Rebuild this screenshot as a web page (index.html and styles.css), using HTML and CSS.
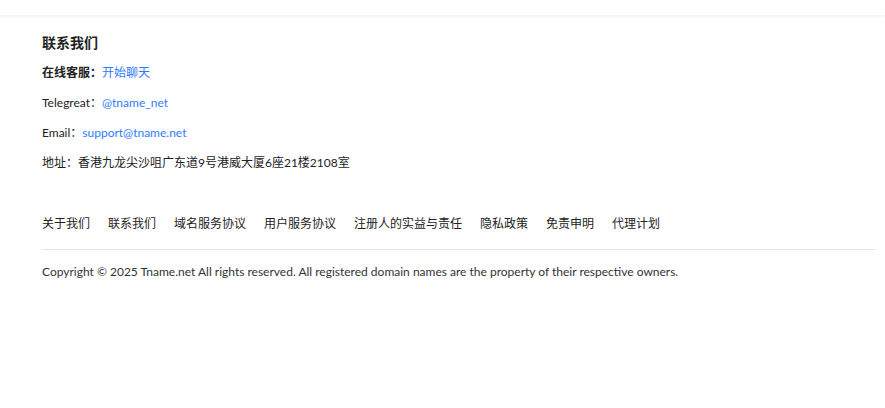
FILE: index.html
```html
<!DOCTYPE html>
<html lang="zh-CN">
<head>
<meta charset="utf-8">
<title>联系我们</title>
<link rel="stylesheet" href="styles.css">
</head>
<body>
<header class="topbar"></header>
<footer class="footer">
  <section class="contact">
    <h3 class="contact-title">联系我们</h3>
    <p class="contact-line"><strong>在线客服：</strong><a class="link" href="#">开始聊天</a></p>
    <p class="contact-line">Telegreat：<a class="link" href="#">@tname_net</a></p>
    <p class="contact-line">Email：<a class="link" href="#">support@tname.net</a></p>
    <p class="contact-line">地址：香港九龙尖沙咀广东道9号港威大厦6座21楼2108室</p>
  </section>
  <nav class="footer-nav">
    <a href="#">关于我们</a>
    <a href="#">联系我们</a>
    <a href="#">域名服务协议</a>
    <a href="#">用户服务协议</a>
    <a href="#">注册人的实益与责任</a>
    <a href="#">隐私政策</a>
    <a href="#">免责申明</a>
    <a href="#">代理计划</a>
  </nav>
  <p class="copyright">Copyright © 2025 Tname.net All rights reserved. All registered domain names are the property of their respective owners.</p>
</footer>
</body>
</html>
```
FILE: styles.css
```css
* { box-sizing: border-box; }
html, body { margin: 0; padding: 0; background: #fff; }
body {
  font-family: Lato, "Noto Sans CJK SC", sans-serif;
  font-size: 12px;
  font-variant-numeric: lining-nums;
  color: #222;
}
.topbar {
  height: 15px;
  background: #fff;
  box-shadow: 0 1px 4px rgba(0,0,0,0.08);
}
.footer {
  padding: 0 10px 0 42px;
}
.contact-title {
  margin: 0;
  padding-top: 18px;
  font-size: 14px;
  line-height: 20px;
  font-weight: 700;
  color: #222;
}
.contact-line {
  margin: 0;
  margin-top: 10px;
  line-height: 20px;
}
.contact-line strong { font-weight: 700; }
.link { color: #2f7bff; text-decoration: none; }
.footer-nav {
  display: flex;
  gap: 18px;
  margin-top: 41px;
  padding-bottom: 15px;
  border-bottom: 1px solid #e6e6e6;
  line-height: 20px;
}
.footer-nav a { color: #222; text-decoration: none; }
.copyright {
  margin: 0;
  padding-top: 12px;
  line-height: 20px;
  color: #333;
}
```
